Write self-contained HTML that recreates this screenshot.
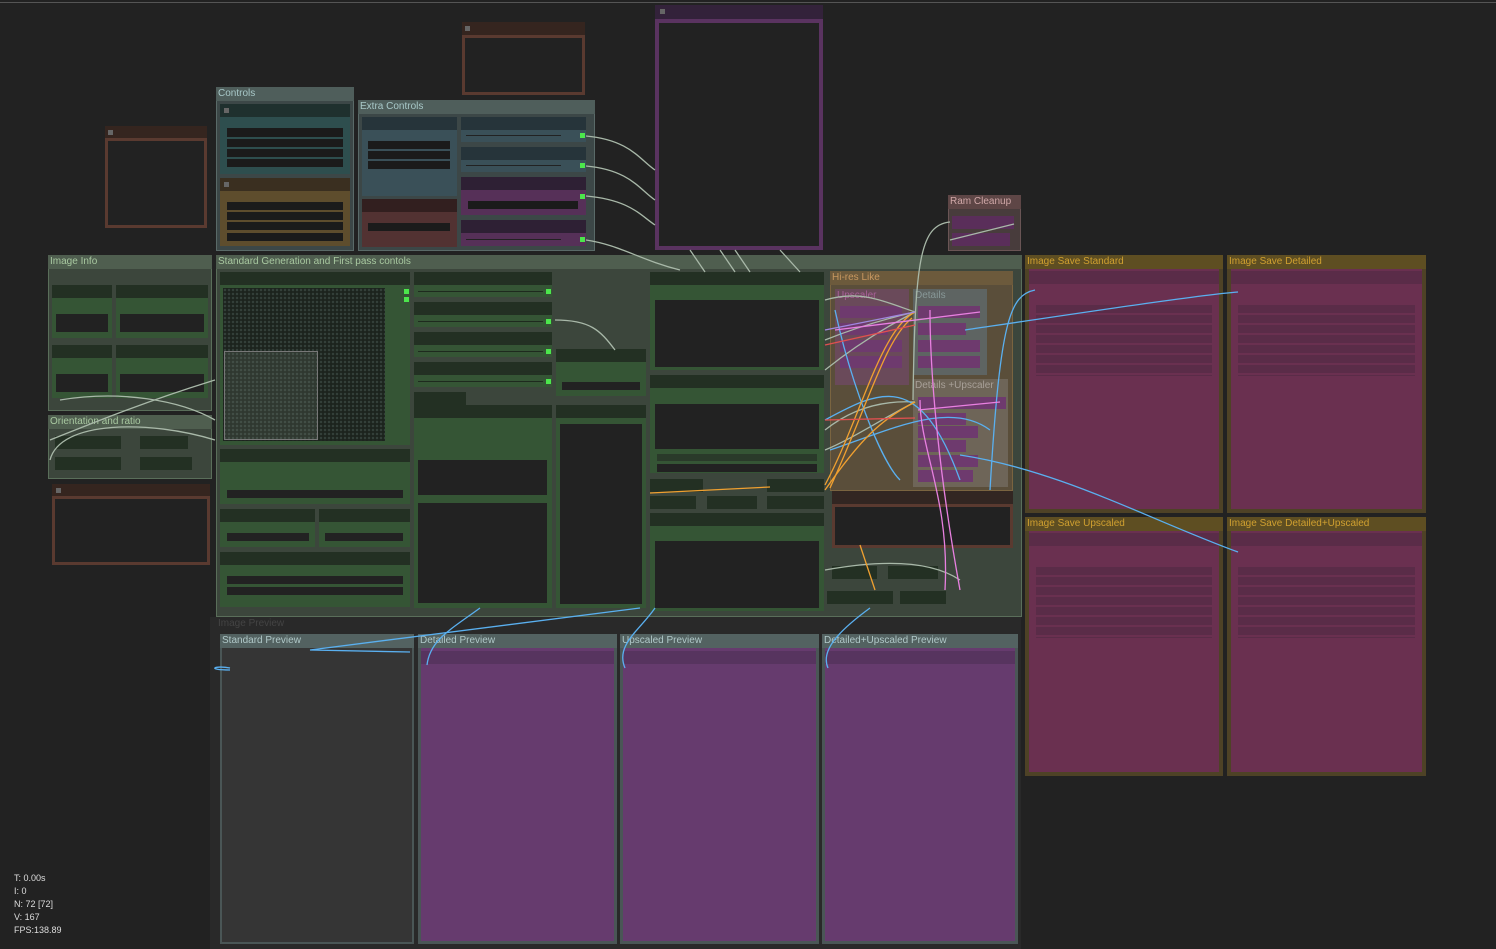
<!DOCTYPE html>
<html><head><meta charset="utf-8"><style>
*{margin:0;padding:0;box-sizing:border-box}
body{width:1496px;height:949px;background:#222;position:relative;overflow:hidden;font-family:"Liberation Sans",sans-serif}
.a{position:absolute}
.t{position:absolute;left:2px;top:0;font-size:10px;line-height:13px;white-space:nowrap}
.nh{position:absolute;background:#233023}
.nb{position:absolute;background:#355535}
.dk{position:absolute;background:#222}
.sq{position:absolute;width:5px;height:5px;background:#666}
.g{position:absolute;width:5px;height:5px;background:#4ce64c}
</style></head><body>
<div class="a" style="left:0;top:2px;width:1496px;height:1px;background:#555"></div>

<div class="a" style="left:105px;top:126px;width:102px;height:12px;background:#35251f"></div>
<div class="a" style="left:105px;top:138px;width:102px;height:90px;border:3px solid #5a3a30"></div>
<div class="sq" style="left:108px;top:130px"></div>
<div class="a" style="left:462px;top:22px;width:123px;height:13px;background:#35251f"></div>
<div class="a" style="left:462px;top:35px;width:123px;height:60px;border:3px solid #5a3a30"></div>
<div class="sq" style="left:465px;top:26px"></div>
<div class="a" style="left:52px;top:484px;width:158px;height:12px;background:#35251f"></div>
<div class="a" style="left:52px;top:496px;width:158px;height:69px;border:3px solid #5a3a30"></div>
<div class="sq" style="left:56px;top:488px"></div>
<div class="a" style="left:655px;top:5px;width:168px;height:14px;background:#33223a"></div>
<div class="a" style="left:655px;top:19px;width:168px;height:231px;border:4px solid #5a3360"></div>
<div class="sq" style="left:660px;top:9px"></div>

<div class="a" style="left:216px;top:87px;width:138px;height:164px;background:#3c4747;border:1px solid #5a6a68"></div>
<div class="a" style="left:216px;top:87px;width:138px;height:14px;background:#4f5e5b"><span class="t" style="color:#a8c8c8">Controls</span></div>
<div class="a" style="left:220px;top:104px;width:130px;height:13px;background:#1f302e"></div>
<div class="sq" style="left:224px;top:108px"></div>
<div class="a" style="left:220px;top:117px;width:130px;height:57px;background:#2e4e4e"></div>
<div class="dk" style="left:227px;top:128px;width:116px;height:9px;background:#1b1b1b"></div>
<div class="dk" style="left:227px;top:139px;width:116px;height:8px;background:#1b1b1b"></div>
<div class="dk" style="left:227px;top:149px;width:116px;height:8px;background:#1b1b1b"></div>
<div class="dk" style="left:227px;top:159px;width:116px;height:8px;background:#1b1b1b"></div>
<div class="a" style="left:220px;top:178px;width:130px;height:13px;background:#3a2f20"></div>
<div class="sq" style="left:224px;top:182px"></div>
<div class="a" style="left:220px;top:191px;width:130px;height:55px;background:#5e4d2d"></div>
<div class="dk" style="left:227px;top:202px;width:116px;height:8px;background:#1b1b1b"></div>
<div class="dk" style="left:227px;top:212px;width:116px;height:8px;background:#1b1b1b"></div>
<div class="dk" style="left:227px;top:222px;width:116px;height:8px;background:#1b1b1b"></div>
<div class="dk" style="left:227px;top:233px;width:116px;height:8px;background:#1b1b1b"></div>

<div class="a" style="left:358px;top:100px;width:237px;height:151px;background:#3c4747;border:1px solid #5a6a68"></div>
<div class="a" style="left:358px;top:100px;width:237px;height:14px;background:#4f5e5b"><span class="t" style="color:#a8c8c8">Extra Controls</span></div>
<div class="a" style="left:362px;top:117px;width:95px;height:13px;background:#26343a"></div>
<div class="a" style="left:362px;top:130px;width:95px;height:66px;background:#3a5058"></div>
<div class="dk" style="left:368px;top:141px;width:82px;height:8px;background:#1b1b1b"></div>
<div class="dk" style="left:368px;top:151px;width:82px;height:8px;background:#1b1b1b"></div>
<div class="dk" style="left:368px;top:161px;width:82px;height:8px;background:#1b1b1b"></div>
<div class="a" style="left:362px;top:199px;width:95px;height:13px;background:#321f1f"></div>
<div class="a" style="left:362px;top:212px;width:95px;height:35px;background:#523232"></div>
<div class="dk" style="left:368px;top:223px;width:82px;height:8px;background:#1b1b1b"></div>
<div class="a" style="left:461px;top:117px;width:125px;height:13px;background:#26343a"></div>
<div class="a" style="left:461px;top:130px;width:125px;height:12px;background:#3a5058"></div>
<div class="a" style="left:461px;top:147px;width:125px;height:13px;background:#26343a"></div>
<div class="a" style="left:461px;top:160px;width:125px;height:12px;background:#3a5058"></div>
<div class="a" style="left:461px;top:177px;width:125px;height:13px;background:#2e2034"></div>
<div class="a" style="left:461px;top:190px;width:125px;height:25px;background:#563058"></div>
<div class="dk" style="left:468px;top:201px;width:110px;height:8px;background:#1b1b1b"></div>
<div class="a" style="left:461px;top:220px;width:125px;height:13px;background:#2e2034"></div>
<div class="a" style="left:461px;top:233px;width:125px;height:13px;background:#563058"></div>
<div class="a" style="left:466px;top:135px;width:95px;height:1px;background:#222"></div>
<div class="a" style="left:466px;top:165px;width:95px;height:1px;background:#222"></div>
<div class="a" style="left:466px;top:239px;width:95px;height:1px;background:#222"></div>
<div class="g" style="left:580px;top:133px"></div><div class="g" style="left:580px;top:163px"></div><div class="g" style="left:580px;top:194px"></div><div class="g" style="left:580px;top:237px"></div>

<div class="a" style="left:948px;top:195px;width:73px;height:56px;background:#483c3c;border:1px solid #6a5555"></div>
<div class="a" style="left:948px;top:195px;width:73px;height:14px;background:#5e4646"><span class="t" style="color:#d0a8a8">Ram Cleanup</span></div>
<div class="a" style="left:952px;top:216px;width:62px;height:13px;background:#5a2e5a"></div>
<div class="a" style="left:952px;top:233px;width:58px;height:13px;background:#5a2e5a"></div>

<div class="a" style="left:48px;top:255px;width:164px;height:156px;background:#3c463c;border:1px solid #5a6e5a"></div>
<div class="a" style="left:48px;top:255px;width:164px;height:14px;background:#4f5e4f"><span class="t" style="color:#a8c8a0">Image Info</span></div>
<div class="nh" style="left:52px;top:285px;width:60px;height:13px"></div>
<div class="nb" style="left:52px;top:298px;width:60px;height:40px"></div>
<div class="dk" style="left:56px;top:314px;width:52px;height:18px"></div>
<div class="nh" style="left:116px;top:285px;width:92px;height:13px"></div>
<div class="nb" style="left:116px;top:298px;width:92px;height:40px"></div>
<div class="dk" style="left:120px;top:314px;width:84px;height:18px"></div>
<div class="nh" style="left:52px;top:345px;width:60px;height:13px"></div>
<div class="nb" style="left:52px;top:358px;width:60px;height:40px"></div>
<div class="dk" style="left:56px;top:374px;width:52px;height:18px"></div>
<div class="nh" style="left:116px;top:345px;width:92px;height:13px"></div>
<div class="nb" style="left:116px;top:358px;width:92px;height:40px"></div>
<div class="dk" style="left:120px;top:374px;width:84px;height:18px"></div>
<div class="a" style="left:48px;top:415px;width:164px;height:64px;background:#3c463c;border:1px solid #5a6e5a"></div>
<div class="a" style="left:48px;top:415px;width:164px;height:14px;background:#4f5e4f"><span class="t" style="color:#a8c8a0">Orientation and ratio</span></div>
<div class="nh" style="left:55px;top:436px;width:66px;height:13px"></div>
<div class="nh" style="left:140px;top:436px;width:48px;height:13px"></div>
<div class="nh" style="left:55px;top:457px;width:66px;height:13px"></div>
<div class="nh" style="left:140px;top:457px;width:52px;height:13px"></div>

<div class="a" style="left:216px;top:255px;width:806px;height:362px;background:#3c463c;border:1px solid #5a6e5a"></div>
<div class="a" style="left:216px;top:255px;width:806px;height:14px;background:#4f5e4f"><span class="t" style="color:#a8c8a0">Standard Generation and First pass contols</span></div>
<div class="nh" style="left:220px;top:272px;width:190px;height:13px"></div>
<div class="nb" style="left:220px;top:285px;width:190px;height:160px"></div>
<div class="a" style="left:223px;top:288px;width:162px;height:153px;background:#1c231d;background-image:radial-gradient(#34403a 1px,transparent 1.5px);background-size:4px 4px"></div>
<div class="a" style="left:224px;top:351px;width:94px;height:89px;border:1px solid #777;background:rgba(120,130,120,.22)"></div>
<div class="nh" style="left:220px;top:449px;width:190px;height:13px"></div>
<div class="nb" style="left:220px;top:462px;width:190px;height:42px"></div>
<div class="dk" style="left:227px;top:490px;width:176px;height:8px"></div>
<div class="nh" style="left:220px;top:509px;width:95px;height:13px"></div>
<div class="nb" style="left:220px;top:522px;width:95px;height:25px"></div>
<div class="dk" style="left:227px;top:533px;width:82px;height:8px"></div>
<div class="nh" style="left:319px;top:509px;width:91px;height:13px"></div>
<div class="nb" style="left:319px;top:522px;width:91px;height:25px"></div>
<div class="dk" style="left:325px;top:533px;width:78px;height:8px"></div>
<div class="nh" style="left:220px;top:552px;width:190px;height:13px"></div>
<div class="nb" style="left:220px;top:565px;width:190px;height:42px"></div>
<div class="dk" style="left:227px;top:576px;width:176px;height:8px"></div>
<div class="dk" style="left:227px;top:587px;width:176px;height:8px"></div>
<div class="nh" style="left:414px;top:272px;width:138px;height:13px"></div>
<div class="nb" style="left:414px;top:285px;width:138px;height:12px"></div>
<div class="nh" style="left:414px;top:302px;width:138px;height:13px"></div>
<div class="nb" style="left:414px;top:315px;width:138px;height:12px"></div>
<div class="nh" style="left:414px;top:332px;width:138px;height:13px"></div>
<div class="nb" style="left:414px;top:345px;width:138px;height:12px"></div>
<div class="nh" style="left:414px;top:362px;width:138px;height:13px"></div>
<div class="nb" style="left:414px;top:375px;width:138px;height:12px"></div>
<div class="a" style="left:418px;top:291px;width:125px;height:1px;background:#1e2a1e"></div>
<div class="a" style="left:418px;top:321px;width:125px;height:1px;background:#1e2a1e"></div>
<div class="a" style="left:418px;top:351px;width:125px;height:1px;background:#1e2a1e"></div>
<div class="a" style="left:418px;top:381px;width:125px;height:1px;background:#1e2a1e"></div>
<div class="g" style="left:546px;top:289px"></div><div class="g" style="left:546px;top:319px"></div><div class="g" style="left:546px;top:349px"></div><div class="g" style="left:546px;top:379px"></div><div class="g" style="left:404px;top:289px"></div><div class="g" style="left:404px;top:297px"></div>
<div class="nh" style="left:414px;top:392px;width:52px;height:13px"></div>
<div class="nh" style="left:414px;top:405px;width:138px;height:13px"></div>
<div class="nb" style="left:414px;top:418px;width:138px;height:190px"></div>
<div class="dk" style="left:418px;top:460px;width:129px;height:35px"></div>
<div class="dk" style="left:418px;top:503px;width:129px;height:100px"></div>
<div class="nh" style="left:556px;top:349px;width:90px;height:13px"></div>
<div class="nb" style="left:556px;top:362px;width:90px;height:34px"></div>
<div class="dk" style="left:562px;top:382px;width:78px;height:8px"></div>
<div class="nh" style="left:556px;top:405px;width:90px;height:13px"></div>
<div class="nb" style="left:556px;top:418px;width:90px;height:190px"></div>
<div class="dk" style="left:560px;top:424px;width:82px;height:180px"></div>
<div class="nh" style="left:650px;top:272px;width:174px;height:13px"></div>
<div class="nb" style="left:650px;top:285px;width:174px;height:85px"></div>
<div class="dk" style="left:655px;top:300px;width:164px;height:67px"></div>
<div class="nh" style="left:650px;top:375px;width:174px;height:13px"></div>
<div class="nb" style="left:650px;top:388px;width:174px;height:85px"></div>
<div class="dk" style="left:655px;top:404px;width:164px;height:45px"></div>
<div class="a" style="left:657px;top:454px;width:160px;height:7px;background:#2a3a2a"></div>
<div class="dk" style="left:657px;top:464px;width:160px;height:8px"></div>
<div class="nh" style="left:650px;top:479px;width:53px;height:13px"></div>
<div class="nh" style="left:767px;top:479px;width:57px;height:13px"></div>
<div class="nh" style="left:650px;top:496px;width:46px;height:13px"></div>
<div class="nh" style="left:707px;top:496px;width:50px;height:13px"></div>
<div class="nh" style="left:767px;top:496px;width:57px;height:13px"></div>
<div class="nh" style="left:650px;top:513px;width:174px;height:13px"></div>
<div class="nb" style="left:650px;top:526px;width:174px;height:85px"></div>
<div class="dk" style="left:655px;top:541px;width:164px;height:67px"></div>
<div class="a" style="left:830px;top:271px;width:183px;height:220px;background:#5a4e3a;border:1px solid #7a6440"></div>
<div class="a" style="left:830px;top:271px;width:183px;height:14px;background:#6c5a3c"><span class="t" style="color:#c89860">Hi-res Like</span></div>
<div class="a" style="left:835px;top:289px;width:74px;height:96px;background:#6a4a5a"><span class="t" style="color:#a86098">Upscaler</span></div>
<div class="a" style="left:913px;top:289px;width:74px;height:86px;background:#5e6462"><span class="t" style="color:#889898">Details</span></div>
<div class="a" style="left:918px;top:306px;width:62px;height:12px;background:#6e3a6e"></div>
<div class="a" style="left:918px;top:323px;width:48px;height:12px;background:#6e3a6e"></div>
<div class="a" style="left:918px;top:340px;width:62px;height:12px;background:#6e3a6e"></div>
<div class="a" style="left:918px;top:356px;width:62px;height:12px;background:#6e3a6e"></div>
<div class="a" style="left:840px;top:306px;width:62px;height:12px;background:#6e3a6e"></div>
<div class="a" style="left:840px;top:323px;width:48px;height:12px;background:#6e3a6e"></div>
<div class="a" style="left:840px;top:340px;width:62px;height:12px;background:#6e3a6e"></div>
<div class="a" style="left:840px;top:356px;width:62px;height:12px;background:#6e3a6e"></div>
<div class="a" style="left:913px;top:379px;width:95px;height:108px;background:#6e6558"><span class="t" style="color:#a8a098">Details +Upscaler</span></div>
<div class="a" style="left:918px;top:397px;width:88px;height:12px;background:#6e3a6e"></div>
<div class="a" style="left:918px;top:413px;width:48px;height:12px;background:#6e3a6e"></div>
<div class="a" style="left:918px;top:426px;width:60px;height:12px;background:#6e3a6e"></div>
<div class="a" style="left:918px;top:440px;width:48px;height:12px;background:#6e3a6e"></div>
<div class="a" style="left:918px;top:455px;width:60px;height:12px;background:#6e3a6e"></div>
<div class="a" style="left:918px;top:470px;width:55px;height:12px;background:#6e3a6e"></div>
<div class="a" style="left:832px;top:491px;width:181px;height:13px;background:#322622"></div>
<div class="a" style="left:832px;top:504px;width:181px;height:44px;border:3px solid #5a3a30;background:#222"></div>
<div class="nh" style="left:832px;top:566px;width:45px;height:13px"></div>
<div class="nh" style="left:888px;top:566px;width:50px;height:13px"></div>
<div class="nh" style="left:827px;top:591px;width:66px;height:13px"></div>
<div class="nh" style="left:900px;top:591px;width:46px;height:13px"></div>

<div class="a" style="left:210px;top:617px;width:811px;height:332px;background:#292929"></div>
<span class="a" style="left:218px;top:618px;font-size:10px;color:#444">Image Preview</span>
<div class="a" style="left:220px;top:634px;width:194px;height:310px;background:#353535;border:2px solid #4a5656"></div>
<div class="a" style="left:220px;top:634px;width:194px;height:14px;background:#536261"><span class="t" style="color:#b0c8c8">Standard Preview</span></div>
<div class="a" style="left:418px;top:634px;width:199px;height:310px;background:#663b6e;border:3px solid #4a5656"></div>
<div class="a" style="left:418px;top:634px;width:199px;height:14px;background:#536261"><span class="t" style="color:#b0c8c8">Detailed Preview</span></div>
<div class="a" style="left:421px;top:651px;width:193px;height:13px;background:#57345f"></div>
<div class="a" style="left:620px;top:634px;width:199px;height:310px;background:#663b6e;border:3px solid #4a5656"></div>
<div class="a" style="left:620px;top:634px;width:199px;height:14px;background:#536261"><span class="t" style="color:#b0c8c8">Upscaled Preview</span></div>
<div class="a" style="left:623px;top:651px;width:193px;height:13px;background:#57345f"></div>
<div class="a" style="left:822px;top:634px;width:196px;height:310px;background:#663b6e;border:3px solid #4a5656"></div>
<div class="a" style="left:822px;top:634px;width:196px;height:14px;background:#536261"><span class="t" style="color:#b0c8c8">Detailed+Upscaled Preview</span></div>
<div class="a" style="left:825px;top:651px;width:190px;height:13px;background:#57345f"></div>

<div class="a" style="left:1025px;top:255px;width:198px;height:258px;background:#6a3050;border:4px solid #4e4226;border-top:0"></div>
<div class="a" style="left:1025px;top:255px;width:198px;height:14px;background:#5e4e22"><span class="t" style="color:#d0a030">Image Save Standard</span></div>
<div class="a" style="left:1227px;top:255px;width:199px;height:258px;background:#6a3050;border:4px solid #4e4226;border-top:0"></div>
<div class="a" style="left:1227px;top:255px;width:199px;height:14px;background:#5e4e22"><span class="t" style="color:#d0a030">Image Save Detailed</span></div>
<div class="a" style="left:1025px;top:517px;width:198px;height:259px;background:#6a3050;border:4px solid #4e4226;border-top:0"></div>
<div class="a" style="left:1025px;top:517px;width:198px;height:14px;background:#5e4e22"><span class="t" style="color:#d0a030">Image Save Upscaled</span></div>
<div class="a" style="left:1227px;top:517px;width:199px;height:259px;background:#6a3050;border:4px solid #4e4226;border-top:0"></div>
<div class="a" style="left:1227px;top:517px;width:199px;height:14px;background:#5e4e22"><span class="t" style="color:#d0a030">Image Save Detailed+Upscaled</span></div>
<div class="a" style="left:1029px;top:271px;width:190px;height:13px;background:#5a2c48"></div>
<div class="a" style="left:1231px;top:271px;width:191px;height:13px;background:#5a2c48"></div>
<div class="a" style="left:1029px;top:533px;width:190px;height:13px;background:#5a2c48"></div>
<div class="a" style="left:1231px;top:533px;width:191px;height:13px;background:#5a2c48"></div>
<div class="a" style="left:1036px;top:305px;width:176px;height:71px;background:repeating-linear-gradient(#5a2c48 0 8px,#6a3050 8px 10px)"></div>
<div class="a" style="left:1238px;top:305px;width:177px;height:71px;background:repeating-linear-gradient(#5a2c48 0 8px,#6a3050 8px 10px)"></div>
<div class="a" style="left:1036px;top:567px;width:176px;height:71px;background:repeating-linear-gradient(#5a2c48 0 8px,#6a3050 8px 10px)"></div>
<div class="a" style="left:1238px;top:567px;width:177px;height:71px;background:repeating-linear-gradient(#5a2c48 0 8px,#6a3050 8px 10px)"></div>

<svg class="a" style="left:0;top:0" width="1496" height="949" fill="none" stroke-width="1.3">
<g stroke="#a8b8a8">
<path d="M586 136 C630 140 640 160 655 170"/><path d="M586 166 C630 170 640 190 655 200"/><path d="M586 196 C630 200 640 215 655 225"/><path d="M586 240 C620 245 640 260 680 270"/>
<path d="M690 250 L705 272"/><path d="M720 250 L735 272"/><path d="M735 250 L750 272"/><path d="M780 250 L800 272"/>
<path d="M915 312 C880 300 860 290 825 300"/><path d="M915 312 C880 320 850 330 825 340"/><path d="M915 312 C880 330 850 350 825 370"/><path d="M915 402 C880 400 850 410 825 430"/><path d="M915 402 C880 420 850 440 825 450"/>
<path d="M950 222 C920 225 915 260 913 400"/><path d="M950 240 L1014 224"/>
<path d="M60 400 C120 390 180 400 215 420"/><path d="M50 460 C60 420 150 420 215 440"/><path d="M50 440 C100 420 150 400 215 380"/>
<path d="M555 320 C590 320 600 330 615 350"/><path d="M825 570 C880 560 930 560 960 580"/>
</g>
<g stroke="#5ab0f0"><path d="M965 330 C1100 310 1200 295 1238 292"/><path d="M960 455 C1060 470 1150 520 1238 552"/><path d="M1035 290 C1010 295 1000 320 990 490"/><path d="M410 652 L310 650 L640 608"/><path d="M480 608 C450 630 430 640 427 665"/><path d="M655 608 C640 630 615 645 625 668"/><path d="M870 608 C840 630 820 650 828 668"/><path d="M230 668 C215 665 205 670 230 670"/><path d="M835 310 C850 380 880 460 900 480"/><path d="M825 420 C880 390 920 370 960 480"/><path d="M830 450 C890 430 950 400 990 430"/></g>
<g stroke="#f0a030"><path d="M825 485 C860 420 880 330 915 312"/><path d="M825 490 C860 440 880 420 915 402"/><path d="M830 488 C870 400 885 340 912 318"/><path d="M650 493 L770 487"/><path d="M860 545 L875 590"/></g>
<g stroke="#e880e0"><path d="M930 310 C930 380 940 480 960 590"/><path d="M920 400 C920 450 950 500 945 590"/><path d="M835 330 L980 312"/><path d="M918 410 L1000 402"/></g>
<g stroke="#e05050"><path d="M825 345 L915 325"/><path d="M825 420 L915 418"/></g>
<g stroke="#a088e0"><path d="M825 330 L915 312"/></g>
</svg>

<div class="a" style="left:14px;top:872px;font-size:9px;line-height:13px;color:#ddd">T: 0.00s<br>I: 0<br>N: 72 [72]<br>V: 167<br>FPS:138.89</div>
</body></html>
